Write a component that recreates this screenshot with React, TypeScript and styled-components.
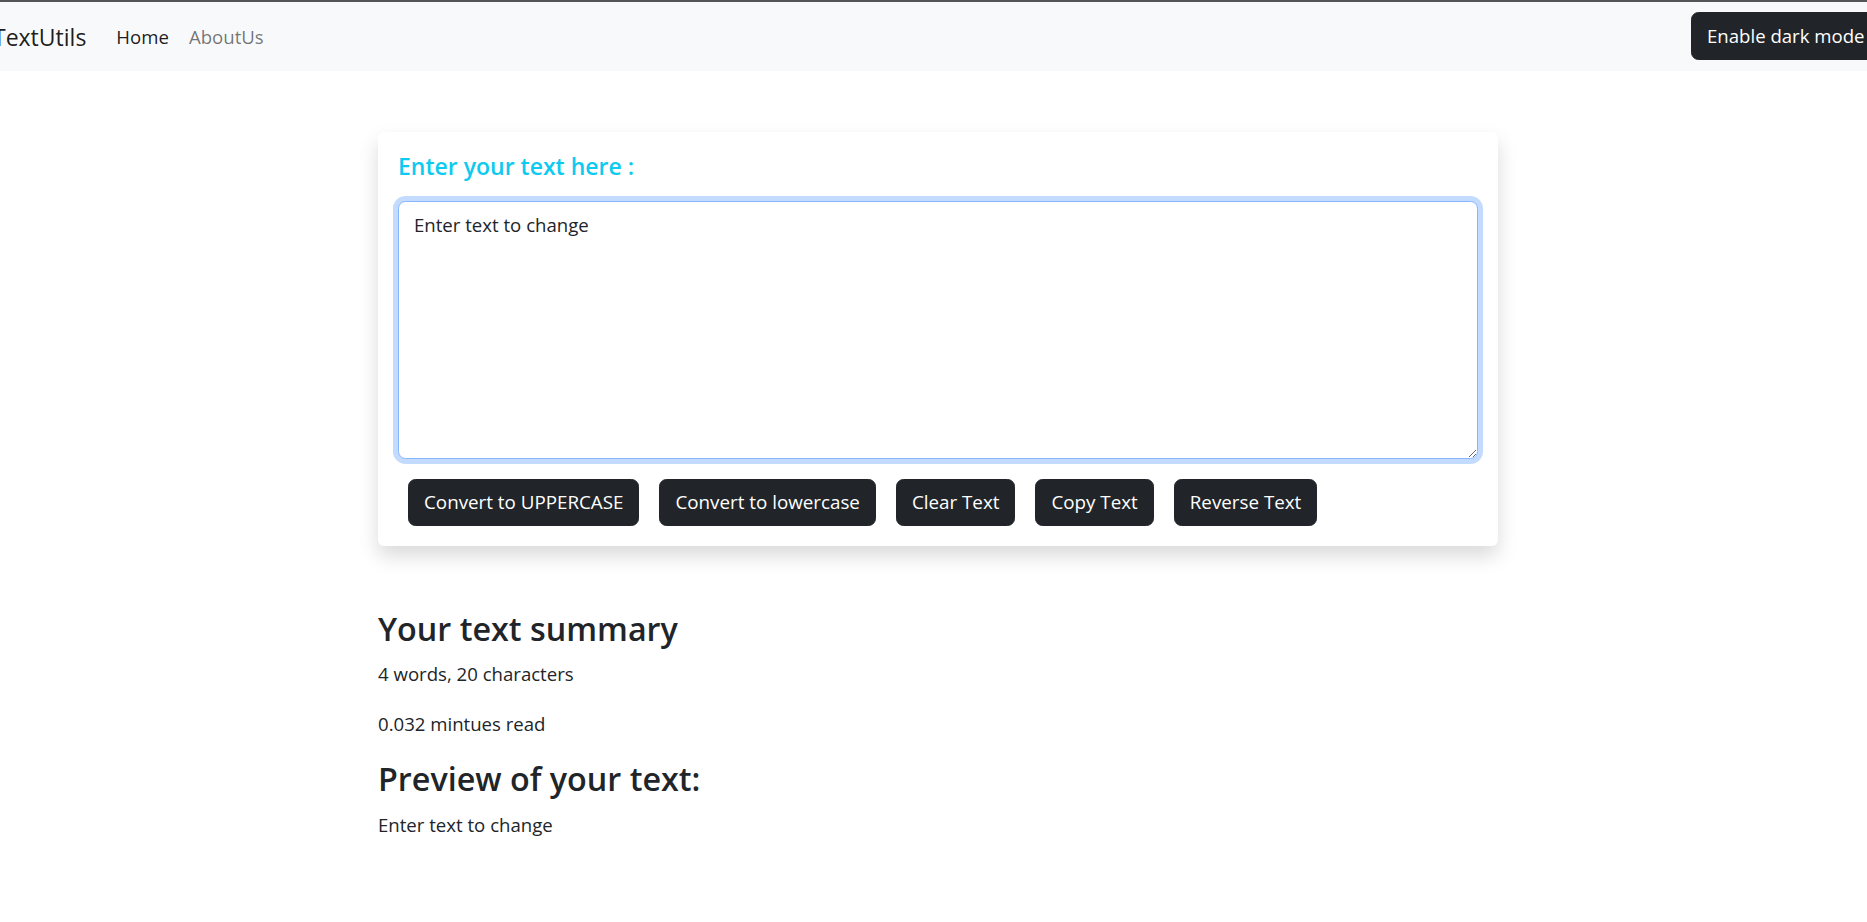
import React from "react";
import styled, { createGlobalStyle } from "styled-components";

const GlobalStyle = createGlobalStyle`
  *, *::before, *::after { box-sizing: border-box; }
  html, body {
    margin: 0;
    padding: 0;
    overflow: hidden;
    background: #ffffff;
  }
  body {
    font-family: "Open Sans", "Noto Sans", Arial, sans-serif;
    font-size: 18.6px;
    line-height: 30px;
    color: #212529;
  }
`;

const Navbar = styled.nav`
  display: flex;
  align-items: center;
  height: 71px;
  background: #f8f9fa;
  border-top: 2px solid #555555;
`;

const Brand = styled.a`
  margin-left: -7px;
  margin-right: 20px;
  font-size: 23px;
  line-height: 36px;
  color: rgba(0, 0, 0, 0.9);
  text-decoration: none;
  white-space: nowrap;
`;

const NavList = styled.ul`
  display: flex;
  list-style: none;
  margin: 0;
  padding: 0;
`;

const NavLink = styled.a<{ $active?: boolean }>`
  display: block;
  padding: 0 10px;
  font-size: 18.6px;
  line-height: 30px;
  color: ${(p) => (p.$active ? "rgba(0, 0, 0, 0.9)" : "rgba(0, 0, 0, 0.55)")};
  text-decoration: none;
  white-space: nowrap;
`;

const NavEnd = styled.div`
  margin-left: auto;
  width: 176px;
  flex-shrink: 0;
  display: flex;
`;

const DarkButton = styled.button`
  flex-shrink: 0;
  height: 48px;
  padding: 0 15px;
  margin-top: -2px;
  border: 1px solid #212529;
  border-radius: 7.5px;
  background: #212529;
  color: #ffffff;
  font-family: inherit;
  font-size: 18.6px;
  line-height: 30px;
  white-space: nowrap;
  cursor: pointer;
`;

const Main = styled.main`
  width: 1120px;
  margin: 61px 0 0 378px;
`;

const Card = styled.section`
  background: #ffffff;
  border-radius: 6px;
  box-shadow: 0 10px 20px rgba(0, 0, 0, 0.15);
  padding: 21px 20px 20px;
`;

const CardTitle = styled.h4`
  margin: 0 0 20px;
  font-size: 23px;
  font-weight: 600;
  line-height: 1.2;
  color: #0dcaf0;
`;

const TextArea = styled.textarea`
  display: block;
  width: 100%;
  height: 258px;
  margin: 0 0 20px;
  padding: 8px 15px 7px;
  font-family: inherit;
  font-size: 18.6px;
  line-height: 30px;
  color: #212529;
  background: #ffffff;
  border: 1px solid #86b7fe;
  border-radius: 7.5px;
  box-shadow: 0 0 0 5px rgba(13, 110, 253, 0.25);
  outline: none;
  resize: vertical;
`;

const ButtonRow = styled.div`
  display: flex;
  flex-wrap: wrap;
`;

const ActionButton = styled.button`
  margin: 0 10px;
  padding: 7.5px 15px;
  border: 1px solid #212529;
  border-radius: 7.5px;
  background: #212529;
  color: #ffffff;
  font-family: inherit;
  font-size: 18.8px;
  line-height: 30px;
  white-space: nowrap;
  cursor: pointer;
`;

const Summary = styled.section`
  margin-top: 63px;
`;

const SectionTitle = styled.h2`
  margin: 0 0 12px;
  font-size: 32.3px;
  font-weight: 600;
  line-height: 1.2;
  color: #212529;
`;

const Para = styled.p`
  margin: 0 0 20px;
  font-size: 18.6px;
  line-height: 30px;
`;

const actions = [
  "Convert to UPPERCASE",
  "Convert to lowercase",
  "Clear Text",
  "Copy Text",
  "Reverse Text",
];

export default function App() {
  const text = "Enter text to change";
  const words = text.split(/\s+/).filter(Boolean).length;
  return (
    <>
      <GlobalStyle />
      <Navbar>
        <Brand href="#">TextUtils</Brand>
        <NavList>
          <li>
            <NavLink href="#" $active>
              Home
            </NavLink>
          </li>
          <li>
            <NavLink href="#">AboutUs</NavLink>
          </li>
        </NavList>
        <NavEnd>
          <DarkButton type="button">Enable dark mode</DarkButton>
        </NavEnd>
      </Navbar>
      <Main>
        <Card>
          <CardTitle>Enter your text here :</CardTitle>
          <TextArea defaultValue={text} rows={8} />
          <ButtonRow>
            {actions.map((a) => (
              <ActionButton key={a} type="button">
                {a}
              </ActionButton>
            ))}
          </ButtonRow>
        </Card>
        <Summary>
          <SectionTitle>Your text summary</SectionTitle>
          <Para>
            {words} words, {text.length} characters
          </Para>
          <Para>0.032 mintues read</Para>
          <SectionTitle>Preview of your text:</SectionTitle>
          <Para>{text}</Para>
        </Summary>
      </Main>
    </>
  );
}
